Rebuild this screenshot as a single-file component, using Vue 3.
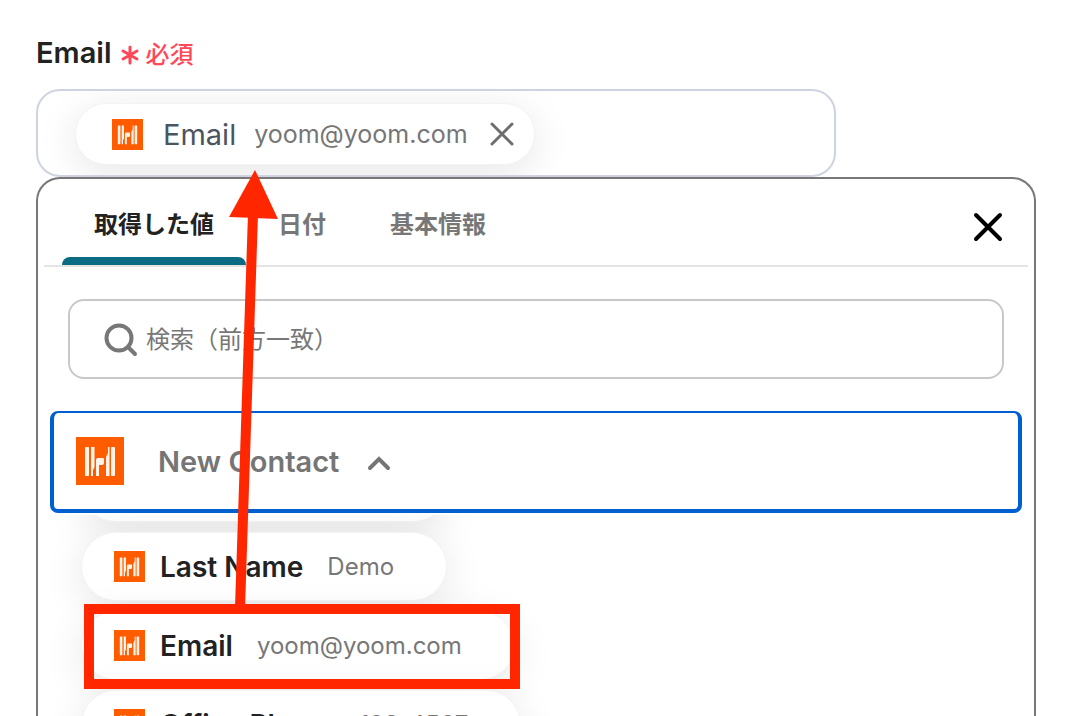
<script setup>
import { ref } from 'vue'

const query = ref('')
const tabs = ['取得した値', '日付', '基本情報']
const active = ref(0)
const fields = [
  { name: 'First Name', value: 'Yoom' },
  { name: 'Last Name', value: 'Demo' },
  { name: 'Email', value: 'yoom@yoom.com' },
  { name: 'Office Phone', value: '123-4567' },
]
</script>

<template>
  <main class="page">
    <svg class="defs" width="0" height="0" aria-hidden="true">
      <symbol id="brand" viewBox="0 0 48 48">
        <rect width="48" height="48" fill="#ff5c00" />
        <g fill="#fff4ea">
          <rect x="9" y="10" width="4" height="29" rx="1" />
          <path d="M15 10h3.500v20l-1.500 3v6h-2z" />
          <path d="M20 23q0-2 2-2h5q1 0 1 1v4q0 2-2 2h-3v11h-3z" />
          <path d="M33.500 10h-1.500v6l-2 4v19h3.500z" />
          <rect x="35" y="10" width="4" height="29" rx="1" />
        </g>
      </symbol>
    </svg>

    <h1 class="label">
      <span>Email</span>
      <span class="required">
        <svg width="20" height="20" viewBox="0 0 20 20" aria-hidden="true">
          <path d="M10 2v16M3 6l14 8M17 6L3 14" />
        </svg>
        必須
      </span>
    </h1>

    <div class="field">
      <div class="token">
        <svg class="logo" aria-hidden="true"><use href="#brand" /></svg>
        <span class="token-name">Email</span>
        <span class="token-value">yoom@yoom.com</span>
        <button class="icon-button" type="button" aria-label="Remove Email">
          <svg width="24" height="24" viewBox="0 0 24 24"><path d="M2 2l20 20M22 2L2 22" /></svg>
        </button>
      </div>
    </div>

    <section class="panel">
      <header class="tabs">
        <button
          v-for="(tab, i) in tabs"
          :key="tab"
          type="button"
          class="tab"
          :class="{ active: i === active }"
          @click="active = i"
        >{{ tab }}</button>
        <button class="icon-button close" type="button" aria-label="閉じる">
          <svg width="32" height="32" viewBox="0 0 32 32"><path d="M4 4l24 24M28 4L4 28" /></svg>
        </button>
      </header>

      <label class="search">
        <svg width="36" height="36" viewBox="0 0 36 36" aria-hidden="true">
          <circle cx="17" cy="17" r="12.500" /><path d="M26 26l7 7" />
        </svg>
        <input v-model="query" type="text" placeholder="検索（前方一致）" aria-label="検索" />
      </label>

      <button class="group" type="button">
        <svg class="group-logo" aria-hidden="true"><use href="#brand" /></svg>
        <span>New Contact</span>
        <svg class="chevron" width="24" height="16" viewBox="0 0 24 16" aria-hidden="true"><path d="M3 13l9-9 9 9" /></svg>
      </button>

      <div class="scroller">
        <ul class="list">
          <li v-for="field in fields" :key="field.name" class="row">
            <button class="pill" type="button">
              <svg class="logo" aria-hidden="true"><use href="#brand" /></svg>
              <span class="name">{{ field.name }}</span>
              <span class="value">{{ field.value }}</span>
            </button>
          </li>
        </ul>
      </div>
    </section>

    <span class="frame" aria-hidden="true"></span>
    <svg class="arrow" width="60" height="440" viewBox="0 0 60 440" aria-hidden="true">
      <path class="shaft" d="M15 438L28 44" />
      <path class="head" d="M30 0L53 49L4 47Z" />
    </svg>
  </main>
</template>

<style>
html,
body,
#app {
  height: 100%;
}
body {
  margin: 0;
  overflow: hidden;
  background: #fff;
}
</style>

<style scoped>
* {
  box-sizing: border-box;
}
.page {
  position: relative;
  display: flex;
  flex-direction: column;
  height: 100%;
  padding: 32px 46px 0 36px;
  overflow: hidden;
  color: #222;
  font-family: Inter, "Noto Sans CJK JP", sans-serif;
}
.defs {
  position: absolute;
}
button,
input {
  padding: 0;
  border: 0;
  background: none;
  color: inherit;
  font: inherit;
}
svg {
  flex: none;
  fill: none;
  stroke-linecap: round;
}
.label {
  display: flex;
  flex: none;
  align-items: center;
  gap: 8px;
  height: 40px;
  margin: 0 0 17px;
  font-size: 29px;
  font-weight: 600;
}
.required {
  display: flex;
  align-items: center;
  gap: 6px;
  color: #ff4757;
  font-size: 24px;
  font-weight: 500;
}
.required svg {
  margin-top: 6px;
  stroke: #ff4757;
  stroke-width: 3;
}
.field {
  flex: none;
  width: 80%;
  height: 88px;
  padding: 12px 37px;
  border: 2px solid #ced3df;
  border-radius: 24px;
  overflow: hidden;
}
.token {
  display: inline-flex;
  align-items: center;
  height: 62px;
  padding: 0 20px 0 36px;
  border: 1px solid #f3f3f3;
  border-radius: 31px;
  background: #fff;
  box-shadow: 0 8px 40px rgba(0, 0, 0, 0.1);
}
.logo {
  width: 31px;
  height: 31px;
}
.token-name {
  margin: 0 18px 0 20px;
  color: #4b5560;
  font-size: 29px;
}
.token-value {
  margin-right: 22px;
  color: #767676;
  font-size: 25px;
}
.icon-button {
  display: flex;
  stroke: #6e6e6e;
  stroke-width: 3;
}
.panel {
  display: flex;
  flex-direction: column;
  flex: 1;
  min-height: 0;
  border: 2px solid #777;
  border-bottom: 0;
  border-radius: 24px 24px 0 0;
}
.tabs {
  display: flex;
  flex: none;
  height: 88px;
  margin: 0 6px;
  padding: 0 24px 0 18px;
  border-bottom: 2px solid #e4e4e4;
}
.tab {
  display: flex;
  align-items: center;
  padding: 8px 32px 0;
  border-bottom: 8px solid transparent;
  color: #777;
  font-size: 24px;
  font-weight: 600;
}
.tab.active {
  position: relative;
  color: #222;
  font-weight: 700;
}
.tab.active::after {
  content: "";
  position: absolute;
  right: 0;
  bottom: -8px;
  left: 0;
  height: 8px;
  border-radius: 8px 8px 0 0;
  background: #0b6b82;
}
.close {
  align-items: center;
  margin-left: auto;
  padding-top: 10px;
  stroke: #000;
  stroke-width: 4;
}
.search {
  display: flex;
  align-items: center;
  flex: none;
  gap: 8px;
  height: 80px;
  margin: 32px 30px;
  padding: 0 32px;
  border: 2px solid #c8c8c8;
  border-radius: 16px;
}
.search svg {
  stroke: #777;
  stroke-width: 4;
}
.search input {
  flex: 1;
  min-width: 0;
  height: 40px;
  outline: 0;
  font-size: 24px;
}
.search input::placeholder {
  color: #777;
  opacity: 1;
}
.group {
  display: flex;
  align-items: center;
  flex: none;
  height: 102px;
  margin: 0 12px;
  padding-left: 22px;
  border: 4px solid #0060d0;
  border-top-width: 2px;
  border-radius: 8px;
  color: #757575;
  font-size: 29px;
  font-weight: 600;
}
.group-logo {
  width: 48px;
  height: 48px;
  margin-right: 34px;
}
.chevron {
  margin-top: 3px;
  margin-left: 28px;
  stroke: #757575;
  stroke-width: 4;
}
.scroller {
  flex: 1;
  min-height: 0;
  margin-top: 2px;
}
.list {
  margin: -62px 0 0;
  padding: 0 0 0 43px;
  list-style: none;
  clip-path: inset(62px 0 0 0);
}
.row {
  height: 79px;
}
.pill {
  display: inline-flex;
  align-items: center;
  height: 69px;
  padding: 0 52px 0 32px;
  border: 1px solid #f3f3f3;
  border-radius: 35px;
  background: #fff;
  box-shadow: 0 8px 40px rgba(0, 0, 0, 0.1);
}
.name {
  margin: 0 24px 0 15px;
  font-size: 28px;
  font-weight: 600;
}
.value {
  color: #777;
  font-size: 24px;
}
.frame {
  position: absolute;
  top: 604px;
  left: 84px;
  width: 436px;
  height: 85px;
  border: 10px solid #ff2600;
}
.arrow {
  position: absolute;
  top: 170px;
  left: 225px;
}
.shaft {
  stroke: #ff2600;
  stroke-width: 10;
  stroke-linecap: butt;
}
.head {
  fill: #ff2600;
}
</style>
